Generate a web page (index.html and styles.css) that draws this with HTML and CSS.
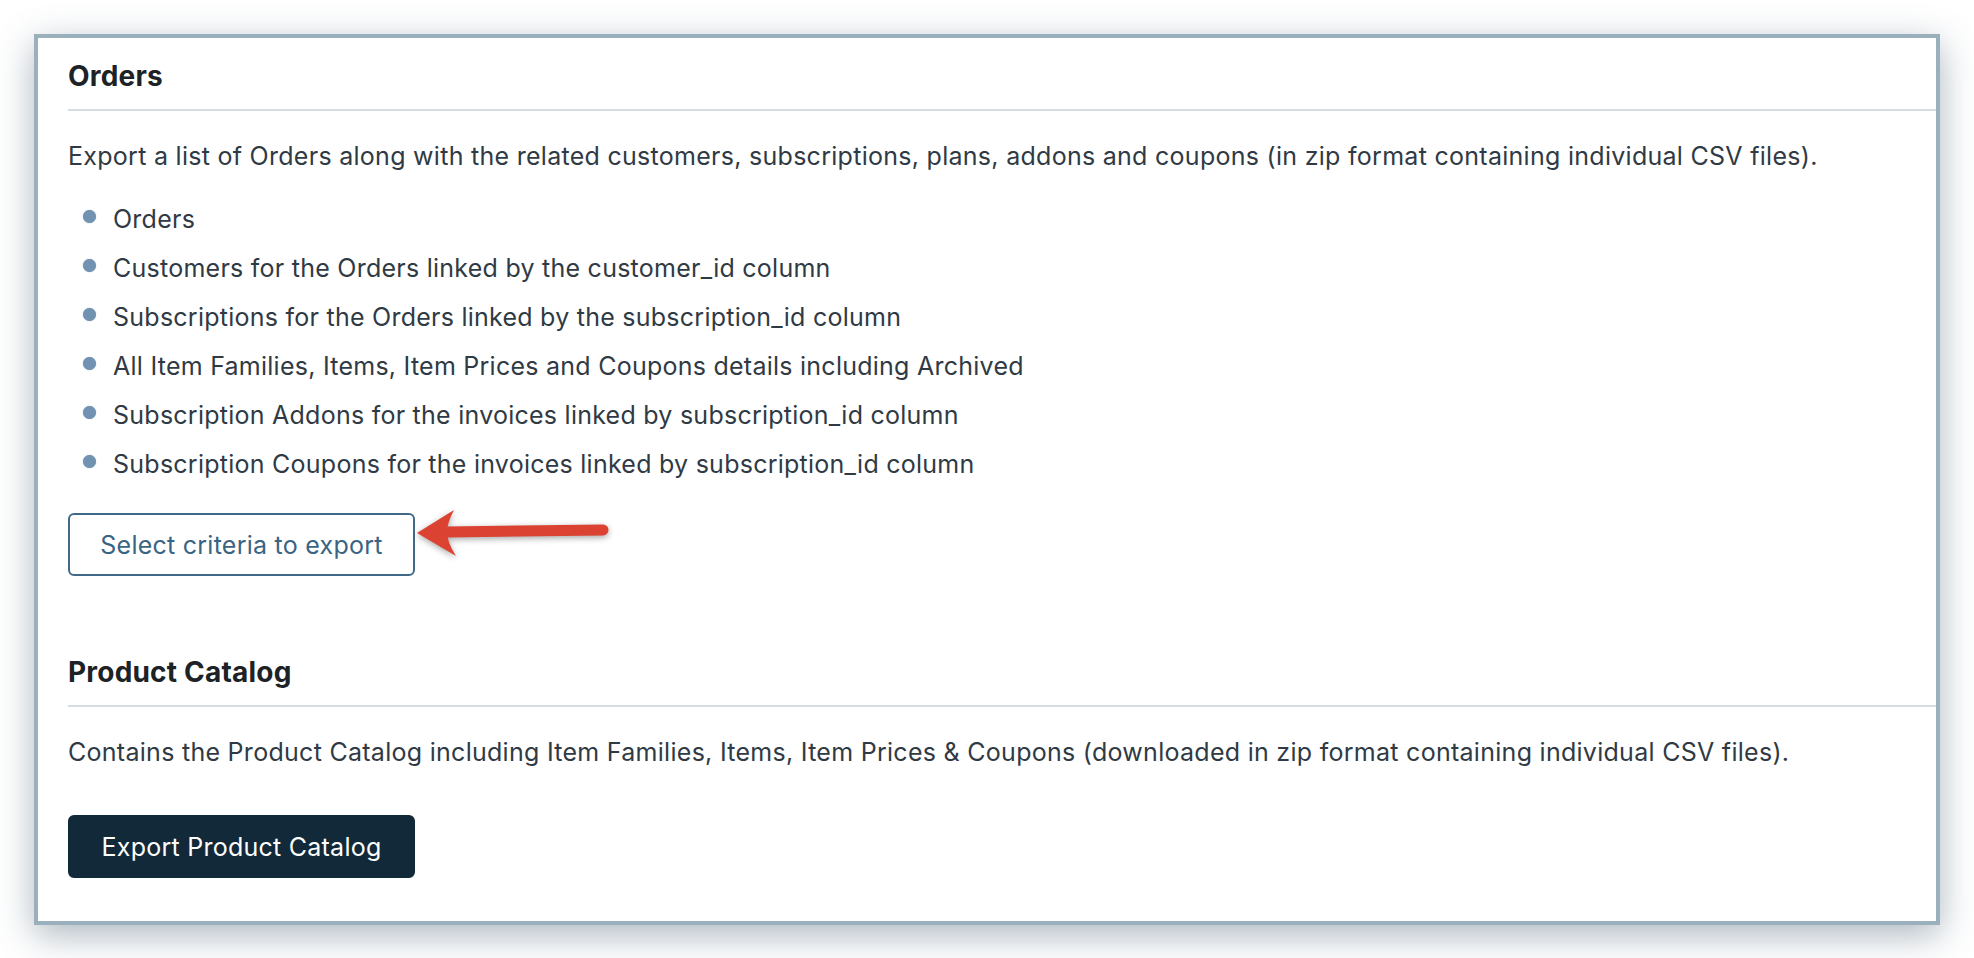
FILE: index.html
```html
<!DOCTYPE html>
<html lang="en">

<head>
    <meta charset="UTF-8">
    <meta name="viewport" content="width=device-width, initial-scale=1.0">
    <title>Exports</title>
    <link rel="stylesheet" href="styles.css">
</head>

<body>
    <div class="panel">
        <section class="export-block">
            <h2 class="block-title">Orders</h2>
            <p class="block-desc">Export a list of Orders along with the related customers, subscriptions, plans, addons and coupons (in zip format containing individual CSV files).</p>
            <ul class="entity-list">
                <li>Orders</li>
                <li>Customers for the Orders linked by the customer_id column</li>
                <li>Subscriptions for the Orders linked by the subscription_id column</li>
                <li>All Item Families, Items, Item Prices and Coupons details including Archived</li>
                <li>Subscription Addons for the invoices linked by subscription_id column</li>
                <li>Subscription Coupons for the invoices linked by subscription_id column</li>
            </ul>
            <div class="block-action">
                <button class="btn btn-outline">Select criteria to export</button>
                <!-- red annotation arrow pointing at the button -->
                <svg class="callout-arrow" width="210" height="66" viewBox="0 0 210 66">
                    <line x1="36" y1="31" x2="193" y2="29" stroke="#dc4231" stroke-width="11" stroke-linecap="round" />
                    <path d="M7 32 L44 9 Q37 22 37 31 Q37 41 46 55 Z" fill="#dc4231" />
                </svg>
            </div>
        </section>

        <section class="export-block">
            <h2 class="block-title">Product Catalog</h2>
            <p class="block-desc">Contains the Product Catalog including Item Families, Items, Item Prices &amp; Coupons (downloaded in zip format containing individual CSV files).</p>
            <div class="block-action spaced">
                <button class="btn btn-dark">Export Product Catalog</button>
            </div>
        </section>
    </div>
</body>

</html>
```

FILE: styles.css
```css
 /* page frame */
 body {
     margin: 0;
     padding-bottom: 34px;
     background: #fff;
     font-family: Inter, "Noto Sans", "Liberation Sans", sans-serif;
     color: #303a44;
 }

 .panel {
     box-sizing: border-box;
     width: 1906px;
     margin: 34px 0 0 34px;
     padding: 20px 0 43px 30px;
     background: #fff;
     border: 4px solid #9bb0bd;
     box-shadow: 0 10px 34px rgba(70, 95, 115, 0.45);
 }

 .export-block + .export-block {
     margin-top: 78px;
 }

 .block-title {
     margin: 0;
     padding-bottom: 15px;
     border-bottom: 2px solid #d7dce1;
     font-size: 28px;
     line-height: 36px;
     font-weight: 700;
     letter-spacing: 0.2px;
     color: #1d2226;
 }

 .block-desc {
     margin: 27px 0 0;
     font-size: 25px;
     line-height: 36px;
     letter-spacing: 0.28px;
 }

 /* bullet list */
 .entity-list {
     list-style: none;
     margin: 27px 0 0;
     padding: 0;
 }

 .entity-list li {
     position: relative;
     padding-left: 45px;
     margin-bottom: 13px;
     font-size: 25px;
     line-height: 36px;
     letter-spacing: 0.25px;
 }

 .entity-list li:last-child {
     margin-bottom: 0;
 }

 .entity-list li::before {
     content: "";
     position: absolute;
     left: 15px;
     top: 9px;
     width: 13px;
     height: 13px;
     border-radius: 50%;
     background: #7192b1;
     box-shadow: 0 0 1px #7192b1;
 }

 /* buttons */
 .block-action {
     position: relative;
     margin-top: 31px;
 }

 .block-action.spaced {
     margin-top: 45px;
 }

 .btn {
     box-sizing: border-box;
     min-width: 347px;
     height: 63px;
     padding: 0 30px;
     border-radius: 6px;
     font-family: inherit;
     font-size: 25px;
     letter-spacing: 0.25px;
     cursor: pointer;
 }

 .btn-outline {
     background: #fff;
     border: 2px solid #416a88;
     color: #3a6483;
 }

 .btn-dark {
     background: #112938;
     border: 2px solid #112938;
     color: #fff;
 }

 .callout-arrow {
     position: absolute;
     left: 342px;
     top: -12px;
     filter: drop-shadow(0 2px 3px rgba(0, 0, 0, 0.35));
 }
```
